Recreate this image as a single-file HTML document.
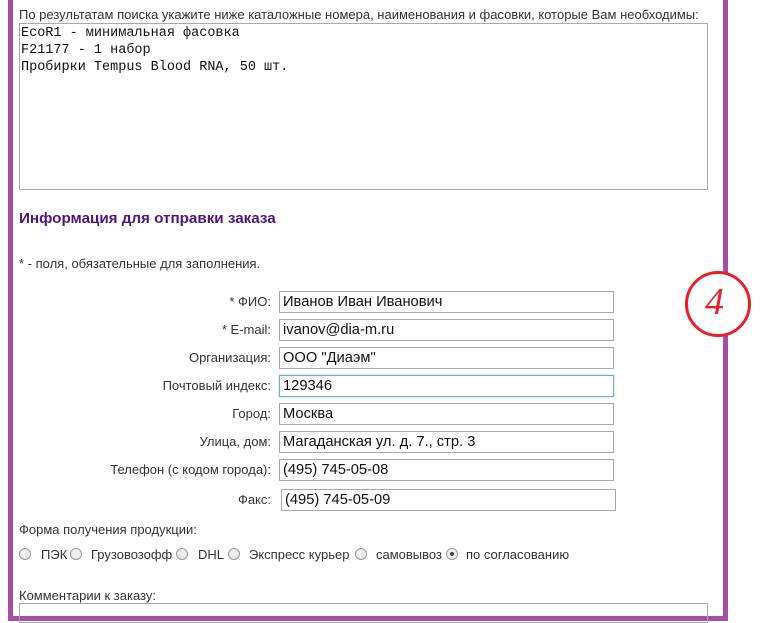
<!DOCTYPE html>
<html><head><meta charset="utf-8"><style>
body{margin:0;width:763px;height:622px;background:#fff;position:relative;overflow:hidden;font-family:"Liberation Sans",Arial,sans-serif;font-size:13px;color:#222}
.frame{position:absolute;left:8px;top:-5px;width:710px;height:616px;border:5px solid #a34fa6}
.a{position:absolute;white-space:nowrap}
.ta{position:absolute;left:19px;top:23px;width:689px;height:167px;border:1px solid #a9a9a9;font-family:"Liberation Mono",monospace;font-size:13.5px;line-height:17px;padding:1px 1px;box-sizing:border-box;color:#111}
.lbl{position:absolute;right:492px;font-size:13px;color:#333}
.in{position:absolute;left:279px;width:335px;height:22px;border:1px solid #a9a9a9;box-sizing:border-box;font-size:14.7px;padding-left:3px;line-height:21px;color:#111}
.r{position:absolute;top:548px;width:12px;height:12px;border:1px solid #999;border-radius:50%;background:#eee;box-sizing:border-box}
.rt{position:absolute;top:547px;white-space:nowrap;color:#333}
</style></head><body>
<div class="frame"></div>
<div class="a" style="left:19px;top:7px;font-size:13px;color:#333">По результатам поиска укажите ниже каталожные номера, наименования и фасовки, которые Вам необходимы:</div>
<div class="ta">EcoR1 - минимальная фасовка<br>F21177 - 1 набор<br>Пробирки Tempus Blood RNA, 50 шт.</div>
<div class="a" style="left:19px;top:210px;font-size:15.2px;font-weight:bold;color:#4e1580">Информация для отправки заказа</div>
<div class="a" style="left:19px;top:256px;color:#333">* - поля, обязательные для заполнения.</div>
<div class="lbl" style="top:294px">* ФИО:</div><div class="in" style="top:291px">Иванов Иван Иванович</div>
<div class="lbl" style="top:322px">* E-mail:</div><div class="in" style="top:319px">ivanov@dia-m.ru</div>
<div class="lbl" style="top:350px">Организация:</div><div class="in" style="top:347px">ООО "Диаэм"</div>
<div class="lbl" style="top:378px">Почтовый индекс:</div><div class="in" style="top:375px;border:1px solid #7aa6dd;box-shadow:0 0 2px #9cc">129346</div>
<div class="lbl" style="top:406px">Город:</div><div class="in" style="top:403px">Москва</div>
<div class="lbl" style="top:434px">Улица, дом:</div><div class="in" style="top:431px">Магаданская ул. д. 7., стр. 3</div>
<div class="lbl" style="top:462px">Телефон (с кодом города):</div><div class="in" style="top:459px">(495) 745-05-08</div>
<div class="lbl" style="top:492px">Факс:</div><div class="in" style="top:489px;left:281px">(495) 745-05-09</div>
<div class="a" style="left:19px;top:522px;color:#333">Форма получения продукции:</div>
<div class="r" style="left:19px"></div><div class="rt" style="left:41px">ПЭК</div>
<div class="r" style="left:70px"></div><div class="rt" style="left:91px">Грузовозофф</div>
<div class="r" style="left:176px"></div><div class="rt" style="left:198px">DHL</div>
<div class="r" style="left:228px"></div><div class="rt" style="left:249px">Экспресс курьер</div>
<div class="r" style="left:355px"></div><div class="rt" style="left:376px">самовывоз</div>
<div class="r" style="left:446px"><span style="position:absolute;left:3px;top:3px;width:4px;height:4px;border-radius:50%;background:#444"></span></div><div class="rt" style="left:466px">по согласованию</div>
<div class="a" style="left:19px;top:588px;color:#333">Комментарии к заказу:</div>
<div style="position:absolute;left:19px;top:603px;width:689px;height:20px;border:1px solid #a9a9a9;box-sizing:border-box"></div>
<div style="position:absolute;left:685px;top:271px;width:60px;height:60px;border:3px solid #e8202a;border-radius:50%;background:#fff"></div>
<div class="a" style="left:705px;top:280px;font-family:'Liberation Serif',serif;font-style:italic;font-size:38px;color:#e8202a">4</div>
</body></html>
